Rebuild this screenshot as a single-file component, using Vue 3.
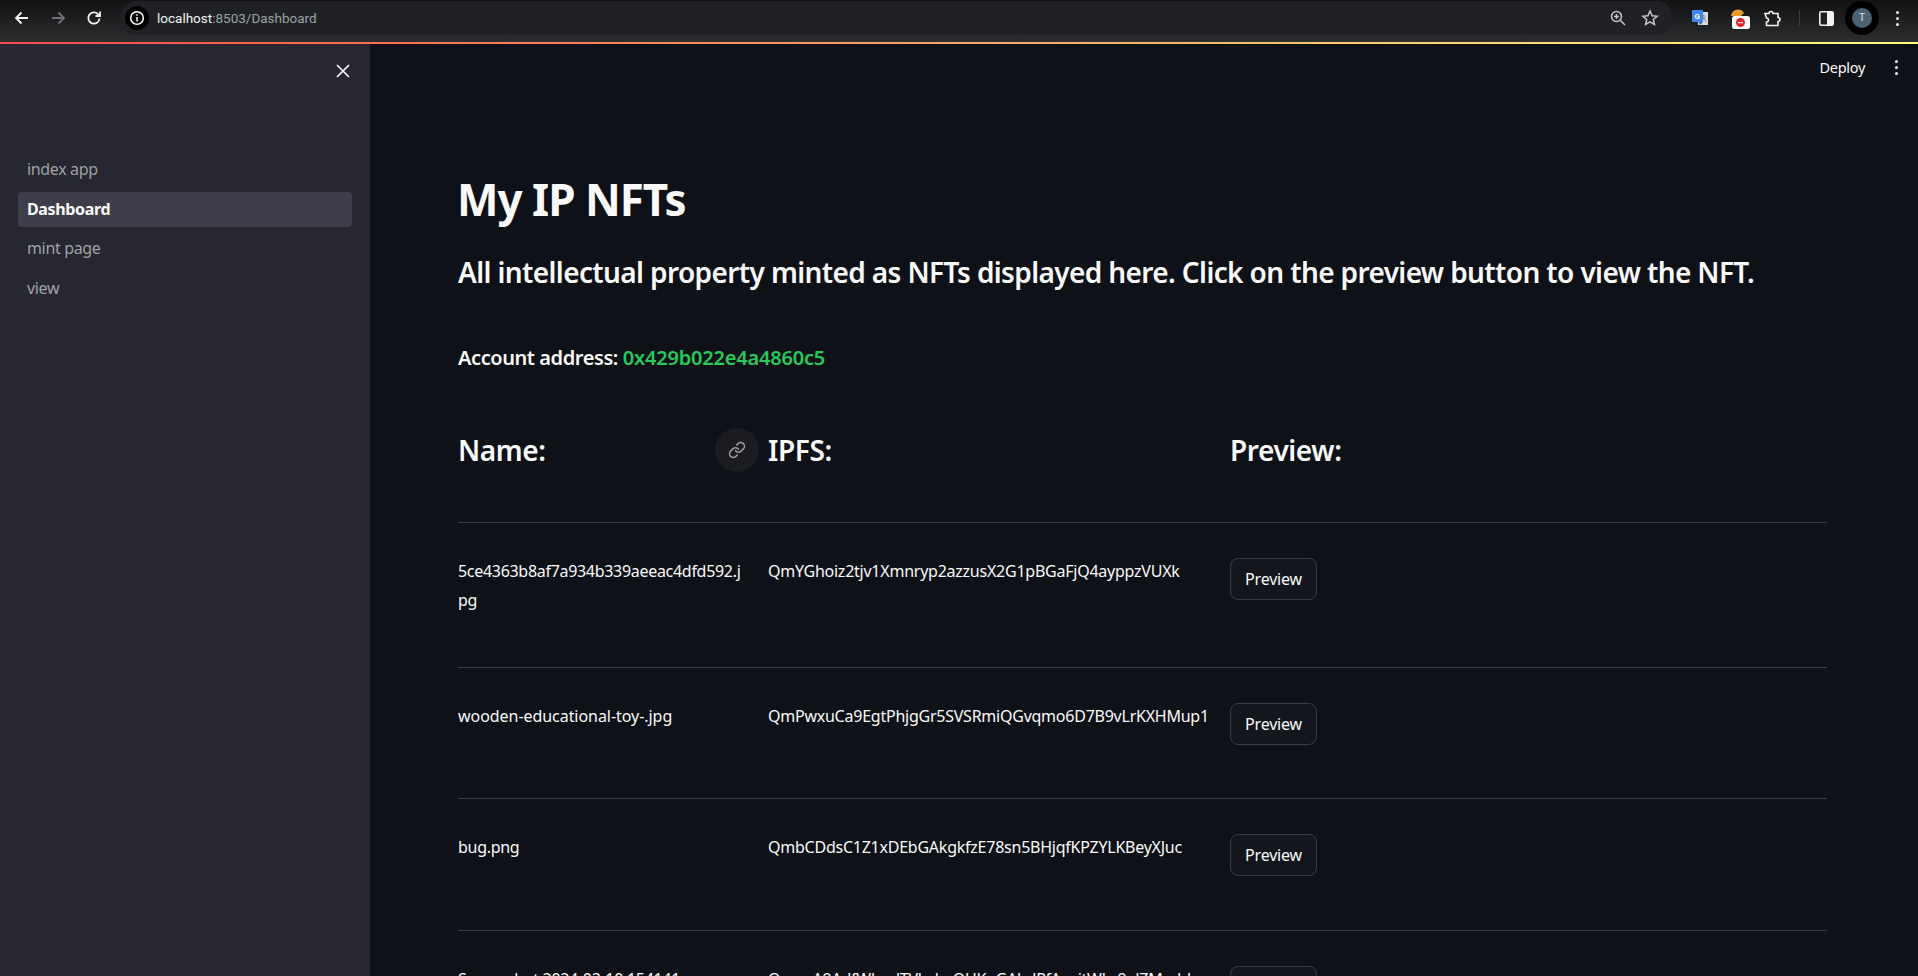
<script setup>
const rows = [
  { name: '5ce4363b8af7a934b339aeeac4dfd592.jpg', ipfs: 'QmYGhoiz2tjv1Xmnryp2azzusX2G1pBGaFjQ4ayppzVUXk', cls: 'r1' },
  { name: 'wooden-educational-toy-.jpg', ipfs: 'QmPwxuCa9EgtPhjgGr5SVSRmiQGvqmo6D7B9vLrKXHMup1', cls: 'r2' },
  { name: 'bug.png', ipfs: 'QmbCDdsC1Z1xDEbGAkgkfzE78sn5BHjqfKPZYLKBeyXJuc', cls: 'r3' },
  { name: 'Screenshot 2024-03-10 154141.png', ipfs: 'QmeeA9AdfWhndTVhzkuOUKoGAbdPfAzgjtWkc9aJZMzzJd', cls: 'r4' },
]
const nav = ['index app', 'Dashboard', 'mint page', 'view']
</script>

<template>
  <div class="app">
    <header class="chrome">
      <div class="nav-icons">
        <svg width="18" height="18" viewBox="0 0 18 18" fill="none" stroke="#f1f3f4" stroke-width="1.8"><path d="M15 9H3.500M8.500 3.500 3 9l5.500 5.500" /></svg>
        <svg width="18" height="18" viewBox="0 0 18 18" fill="none" stroke="#6f7073" stroke-width="1.800"><path d="M3 9h11.500M9.500 3.500 15 9l-5.500 5.500" /></svg>
        <svg width="18" height="18" viewBox="0 0 18 18" fill="none" stroke="#f1f3f4" stroke-width="1.800"><path d="M14.500 9.500a5.600 5.600 0 1 1-1.600-4.400L15 7" /><path d="M15 2.500V7h-4.500" /></svg>
      </div>
      <div class="omnibox">
        <div class="omni-left">
          <span class="site-badge">
            <svg width="16" height="16" viewBox="0 0 16 16" fill="none" stroke="#fff" stroke-width="1.500"><circle cx="8" cy="8" r="6.300" /><path d="M8 7v4.500M8 4.200v1.500" /></svg>
          </span>
          <span class="url"><span class="host">localhost</span>:8503/Dashboard</span>
        </div>
        <div class="omni-right">
          <svg width="18" height="18" viewBox="0 0 18 18" fill="none" stroke="#c4c7c5" stroke-width="1.500"><circle cx="7.500" cy="7.500" r="5" /><path d="M11 11l5 5M7.500 5v5M5 7.500h5" /></svg>
          <svg width="18" height="18" viewBox="0 0 18 18" fill="none" stroke="#c4c7c5" stroke-width="1.500"><path d="M9 2l2.100 4.700 5 .5-3.800 3.300 1.100 5L9 12.900l-4.400 2.600 1.100-5L1.900 7.200l5-.5z" /></svg>
        </div>
      </div>
      <div class="ext-icons">
        <svg class="ext-translate" width="18" height="18" viewBox="0 0 18 18"><rect x="7" y="3" width="10" height="13" fill="#d8dadc" /><path d="M10.500 7h4M12.500 6v1.500M11 13l2-5 2 5" fill="none" stroke="#8a8d90" stroke-width="1" /><rect x="1" y="1" width="11" height="12" rx="1" fill="#4285f4" /><path d="M12 13l-3 3-1-3z" fill="#2a56c6" /><text x="3.500" y="10" font-size="8" font-weight="700" fill="#fff" font-family="Roboto, sans-serif">G</text></svg>
        <span class="ext-blocker">
          <svg width="22" height="22" viewBox="0 0 22 22"><path d="M3 9a7 7 0 0 1 13-3l-3 3z" fill="#e89a2c" /><rect x="4" y="9" width="18" height="13" rx="2.500" fill="#fff" /><circle cx="12.500" cy="15.500" r="4.500" fill="#e8232a" /><rect x="10" y="15" width="5" height="1.200" fill="#fff" /></svg>
        </span>
        <svg class="ext-puzzle" width="18" height="18" viewBox="0 0 18 18" fill="none" stroke="#f1f3f4" stroke-width="1.600"><path d="M2 4.500h4a2 2 0 1 1 4 0h5v4a2 2 0 1 1 0 4v4H3.500v-3.500a2 2 0 1 0 0-4z" /></svg>
        <span class="sep" />
        <svg class="ext-panel" width="15" height="15" viewBox="0 0 15 15"><rect x="0.800" y="0.800" width="13.400" height="13.400" rx="1.500" fill="none" stroke="#f1f3f4" stroke-width="1.600" /><rect x="8" y="1" width="6" height="13" fill="#f1f3f4" /></svg>
        <span class="avatar-ring"><span class="avatar">T</span></span>
        <span class="dots"><i /><i /><i /></span>
      </div>
    </header>
    <div class="stripe" />
    <div class="body">
      <aside class="sidebar">
        <div class="close">
          <svg width="14" height="14" viewBox="0 0 14 14" stroke="#fafafa" stroke-width="1.700"><path d="M1 1l12 12M13 1 1 13" /></svg>
        </div>
        <nav class="menu">
          <a v-for="n in nav" :key="n" :class="['item', { active: n === 'Dashboard' }]">{{ n }}</a>
        </nav>
      </aside>
      <main class="main">
        <div class="topbar">
          <span class="deploy">Deploy</span>
          <span class="dots main-dots"><i /><i /><i /></span>
        </div>
        <div class="content">
          <h1>My IP NFTs</h1>
          <h3 class="sub">All intellectual property minted as NFTs displayed here. Click on the preview button to view the NFT.</h3>
          <p class="account">Account address: <span class="green">0x429b022e4a4860c5</span></p>
          <div class="grid head">
            <div class="col name-head">
              <span>Name:</span>
              <span class="link">
                <svg width="18" height="18" viewBox="0 0 24 24" fill="none" stroke="#9a9ba0" stroke-width="2" stroke-linecap="round" stroke-linejoin="round"><path d="M10 13a5 5 0 0 0 7.540.54l3-3a5 5 0 0 0-7.070-7.070l-1.720 1.710" /><path d="M14 11a5 5 0 0 0-7.540-.54l-3 3a5 5 0 0 0 7.070 7.070l1.710-1.710" /></svg>
              </span>
            </div>
            <div class="col">IPFS:</div>
            <div class="col">Preview:</div>
          </div>
          <div v-for="r in rows" :key="r.name" :class="['grid', 'row', r.cls]">
            <div class="cell name">{{ r.name }}</div>
            <div class="cell">{{ r.ipfs }}</div>
            <div class="cell"><button class="btn">Preview</button></div>
          </div>
        </div>
      </main>
    </div>
  </div>
</template>

<style>
html, body { margin: 0; background: #0e1117; overflow: hidden; }
</style>

<style scoped>
.app { width: 1918px; height: 976px; overflow: hidden; display: flex; flex-direction: column; font-family: "Noto Sans", "Liberation Sans", sans-serif; color: #fafafa; background: #0e1117; }
.chrome { height: 42px; flex: none; display: flex; align-items: center; box-sizing: border-box; padding: 1px 0 7px; background: linear-gradient(#111213, #2c2d2e); }
.nav-icons { display: flex; gap: 18px; padding-left: 13px; width: 120px; box-sizing: border-box; }
.omnibox { width: 1553px; height: 34px; border-radius: 17px; background: #202124; display: flex; justify-content: space-between; align-items: center; }
.omni-left { display: flex; align-items: center; gap: 8px; padding-left: 5px; }
.site-badge { width: 24px; height: 24px; border-radius: 50%; background: #000; display: flex; align-items: center; justify-content: center; }
.url { font: 13.500px "Roboto", sans-serif; color: #9aa0a6; }
.host { color: #f1f3f4; }
.omni-right { display: flex; gap: 14px; padding-right: 14px; }
.ext-icons { flex: 1; display: flex; align-items: center; height: 100%; }
.ext-translate { margin-left: 18px; }
.ext-blocker { margin-left: 19px; height: 22px; }
.ext-puzzle { margin-left: 13px; }
.sep { width: 1px; height: 16px; background: #3c3d3e; margin-left: 18px; }
.ext-panel { margin-left: 19px; }
.avatar-ring { width: 34px; height: 34px; border-radius: 50%; background: #000; display: flex; align-items: center; justify-content: center; margin-left: 11px; }
.avatar { width: 20px; height: 20px; border-radius: 50%; background: #4a6272; color: #d6dde2; font: 11px/20px "Roboto", sans-serif; text-align: center; }
.dots { display: flex; flex-direction: column; gap: 3px; margin-left: 17px; }
.dots i { width: 3px; height: 3px; border-radius: 50%; background: #f1f3f4; }
.stripe { height: 2px; flex: none; background: linear-gradient(90deg, #ff4b4b, #fffd80); }
.body { flex: 1; display: flex; min-height: 0; }
.sidebar { width: 370px; flex: none; background: #262730; box-sizing: border-box; padding: 0 18px; }
.close { display: flex; justify-content: flex-end; padding: 20px 2px 0 0; height: 14px; margin-bottom: 74px; }
.menu { display: flex; flex-direction: column; gap: 4.500px; }
.item { height: 35px; line-height: 35px; padding-left: 9px; border-radius: 4px; font-size: 16px; color: #a0a1a6; letter-spacing: -0.35px; }
.item.active { background: #3d3e49; color: #fafafa; font-weight: 700; }
.main { flex: 1; min-width: 0; position: relative; overflow: hidden; }
.topbar { position: absolute; top: 0; right: 0; height: 46px; display: flex; align-items: center; }
.deploy { font-size: 14.500px; letter-spacing: -0.3px; }
.main-dots { margin: 0 20px 0 30px; }
.content { padding: 125px 91px 0 88px; }
h1 { margin: 0 0 0 -1px; font-size: 44px; line-height: 60px; font-weight: 700; letter-spacing: -1px; }
.sub { margin: 21px 0 0; font-size: 28px; line-height: 44px; font-weight: 600; letter-spacing: -0.62px; white-space: nowrap; }
.account { margin: 49px 0 0; font-size: 20px; line-height: 30px; font-weight: 600; letter-spacing: -0.42px; }
.green { color: #27c95a; letter-spacing: -0.2px; }
.grid { display: grid; grid-template-columns: 310px 462px 1fr; }
.head { margin-top: 46px; height: 104px; font-size: 28px; line-height: 44px; font-weight: 600; letter-spacing: -0.4px; border-bottom: 1px solid #3a3c42; box-sizing: border-box; padding-top: 9px; }
.name-head { display: flex; justify-content: space-between; padding-right: 9px; }
.link { width: 44px; height: 44px; border-radius: 50%; background: #1a1c22; display: flex; align-items: center; justify-content: center; }
.row { border-bottom: 1px solid #3a3c42; box-sizing: border-box; font-size: 16px; line-height: 29px; letter-spacing: -0.24px; padding-top: 34px; }
.r1 { height: 145px; }
.r2 { height: 131px; }
.r3 { height: 132px; }
.r4 { height: 132px; }
.name { padding-right: 22px; word-break: break-all; letter-spacing: -0.3px; }
.r2 .name { letter-spacing: -0.05px; }
.btn { height: 42px; width: 87px; background: #13161d; border: 1px solid #3a3c45; border-radius: 8px; color: #fafafa; font: 16px "Noto Sans", sans-serif; letter-spacing: -0.2px; margin-top: 1px; padding: 0; }
</style>
